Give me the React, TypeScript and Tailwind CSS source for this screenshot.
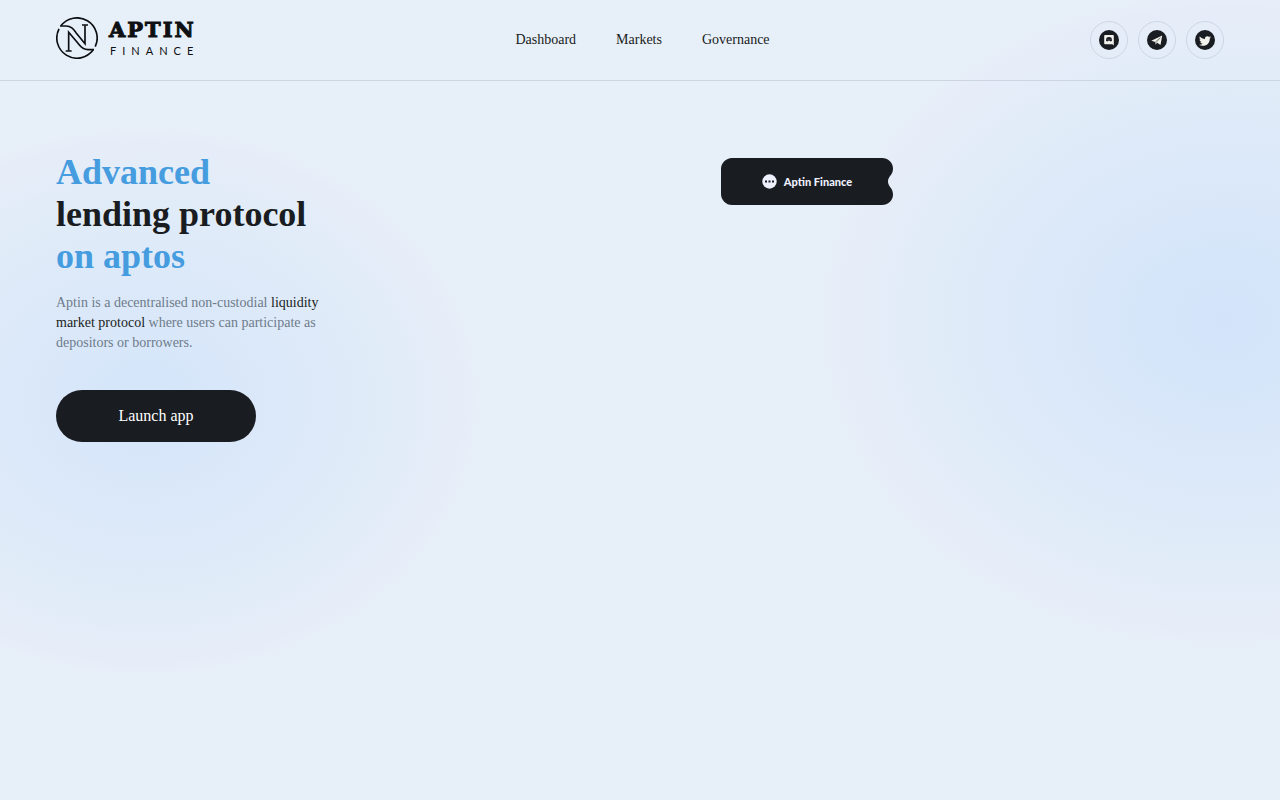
import React from 'react';
import { FaTwitter } from 'react-icons/fa';

const NAV_LINKS = ['Dashboard', 'Markets', 'Governance'];

function LogoMark() {
  return (
    <svg viewBox="18 21 126 126" className="w-[42px] h-[42px] shrink-0" fill="none" stroke="#0d0f12" strokeWidth="5" aria-hidden="true">
      <path d="M32.700 47.600 A60.500 60.500 0 0 1 135.700 109.900" />
      <path d="M27.100 56.500 A60.500 60.500 0 0 0 129.400 120.300" />
      <path d="M30 48 H48 C64 48 70 57 78 68 L105 101 V46" />
      <path d="M132 119 H114 C98 119 91 109 84 100 L56 67 V122" />
      <path d="M96 45 H114 M47 123 H65" />
    </svg>
  );
}

function DiscordIcon() {
  return (
    <svg viewBox="0 0 20 20" className="w-5 h-5" aria-hidden="true">
      <path fill="#f2f1ec" d="M6 5h8a.8.8 0 0 1 .8.8V15.400l-1.400-1.200H6a.8.8 0 0 1-.8-.8V5.800A.8.8 0 0 1 6 5Z" />
      <path fill="#191c20" d="M7.800 7.500c1.400-.7 3-.7 4.400 0 .5.900.8 2 .8 3.200-.5.500-1 .7-1.600.7l-.5-.7H9.100l-.5.700c-.6 0-1.100-.2-1.600-.7 0-1.200.3-2.300.8-3.200Z" />
      <path fill="#f2f1ec" d="M8.400 9h1v1h-1zM10.600 9h1v1h-1z" opacity=".3" />
    </svg>
  );
}

function TelegramIcon() {
  return (
    <svg viewBox="0 0 20 20" className="w-5 h-5" aria-hidden="true">
      <path fill="#f2f1ec" d="M4.300 10.700 15.200 5.500 13.500 15 10.200 12.700 8.600 14.800 8.200 11.900Z" />
      <path fill="none" stroke="#191c20" strokeWidth=".4" d="M8.300 11.900 13.300 7.700 9.300 12.400 8.700 14.600" />
    </svg>
  );
}

const SOCIALS = [
  { label: 'Discord', icon: <DiscordIcon /> },
  { label: 'Telegram', icon: <TelegramIcon /> },
  { label: 'Twitter', icon: <FaTwitter className="w-3 h-3 mt-px" /> },
];

function Header() {
  return (
    <header className="flex items-center justify-between h-[81px] px-14 border-b border-[#ccd6e2]">
      <a href="#" aria-label="Aptin Finance" className="flex w-[139px] h-[46px] gap-[11px] text-[#0d0f12]">
        <LogoMark />
        <span className="flex flex-col">
          <span className="font-['DejaVu_Serif'] font-bold text-[21px] leading-[26px] tracking-[2px] [-webkit-text-stroke:1px_#0d0f12]">
            APTIN
          </span>
          <span className="pl-px font-[Lato] text-[11px] leading-4 tracking-[6px]">FINANCE</span>
        </span>
      </a>
      <nav className="flex gap-10 text-sm">
        {NAV_LINKS.map((l) => (
          <a key={l} href="#">{l}</a>
        ))}
      </nav>
      <div className="flex gap-2.5">
        {SOCIALS.map((s) => (
          <a
            key={s.label}
            href="#"
            aria-label={s.label}
            className="w-[38px] h-[38px] rounded-full border border-[#ccd8e4] flex items-center justify-center"
          >
            <span className="w-5 h-5 rounded-full bg-[#191c20] text-[#f2f1ec] flex items-center justify-center">
              {s.icon}
            </span>
          </a>
        ))}
      </div>
    </header>
  );
}

function Ticket() {
  return (
    <div className="relative w-[172px] h-[47px] flex items-center justify-center gap-[7px]">
      <svg viewBox="0 0 172 47" className="absolute inset-0 w-full h-full" aria-hidden="true">
        <path
          fill="#191c20"
          d="M11 0H161C167 0 172 4.500 172 10.500C172 17.500 167 18 167 23.500C167 29 172 29.500 172 36.500C172 42.500 167 47 161 47H11C5 47 0 42 0 36V11C0 5 5 0 11 0Z"
        />
      </svg>
      <svg viewBox="0 0 15 15" className="relative w-[15px] h-[15px]" aria-hidden="true">
        <circle cx="7.500" cy="7.500" r="7.200" fill="#eef0fe" />
        <path fill="#191c20" d="M3 6.500h2v2H3zM6.500 6.500h2v2h-2zM10 6.500h2v2h-2z" />
      </svg>
      <span className="relative font-[Lato] font-black text-[11px] leading-4 text-[#eef0fe]">Aptin Finance</span>
    </div>
  );
}

export default function App() {
  return (
    <div
      className="min-h-screen font-['Liberation_Serif',serif] text-[#191c20] bg-[#e7eff9] bg-[radial-gradient(335px_275px_at_145px_402px,#d4e5fa_0%,#dce9f9_45%,#e1ecf8_75%,#e6edf8_94%,#e7eff900_100%),radial-gradient(404px_328px_at_calc(100%-56px)_320px,#d2e4fa_0%,#dce9f9_50%,#e1ecf8_75%,#e6edf8_94%,#e7eff900_100%)]"
    >
      <Header />
      <main className="flex justify-between px-14 pt-[70px]">
        <section>
          <h1 className="text-4xl leading-[42px] font-bold">
            <span className="block text-[#459cdf]">Advanced</span>
            lending protocol
            <span className="block text-[#459cdf]">on aptos</span>
          </h1>
          <p className="mt-4 w-[280px] text-sm leading-5 text-[#6e7b8a]">
            Aptin is a decentralised non-custodial <span className="text-[#191c20]">liquidity market protocol</span> where
            users can participate as depositors or borrowers.
          </p>
          <button className="mt-[37px] w-[200px] h-[52px] rounded-full bg-[#191c20] text-base text-white">
            Launch app
          </button>
        </section>
        <section className="w-[503px] pt-[7px]">
          <Ticket />
        </section>
      </main>
    </div>
  );
}
